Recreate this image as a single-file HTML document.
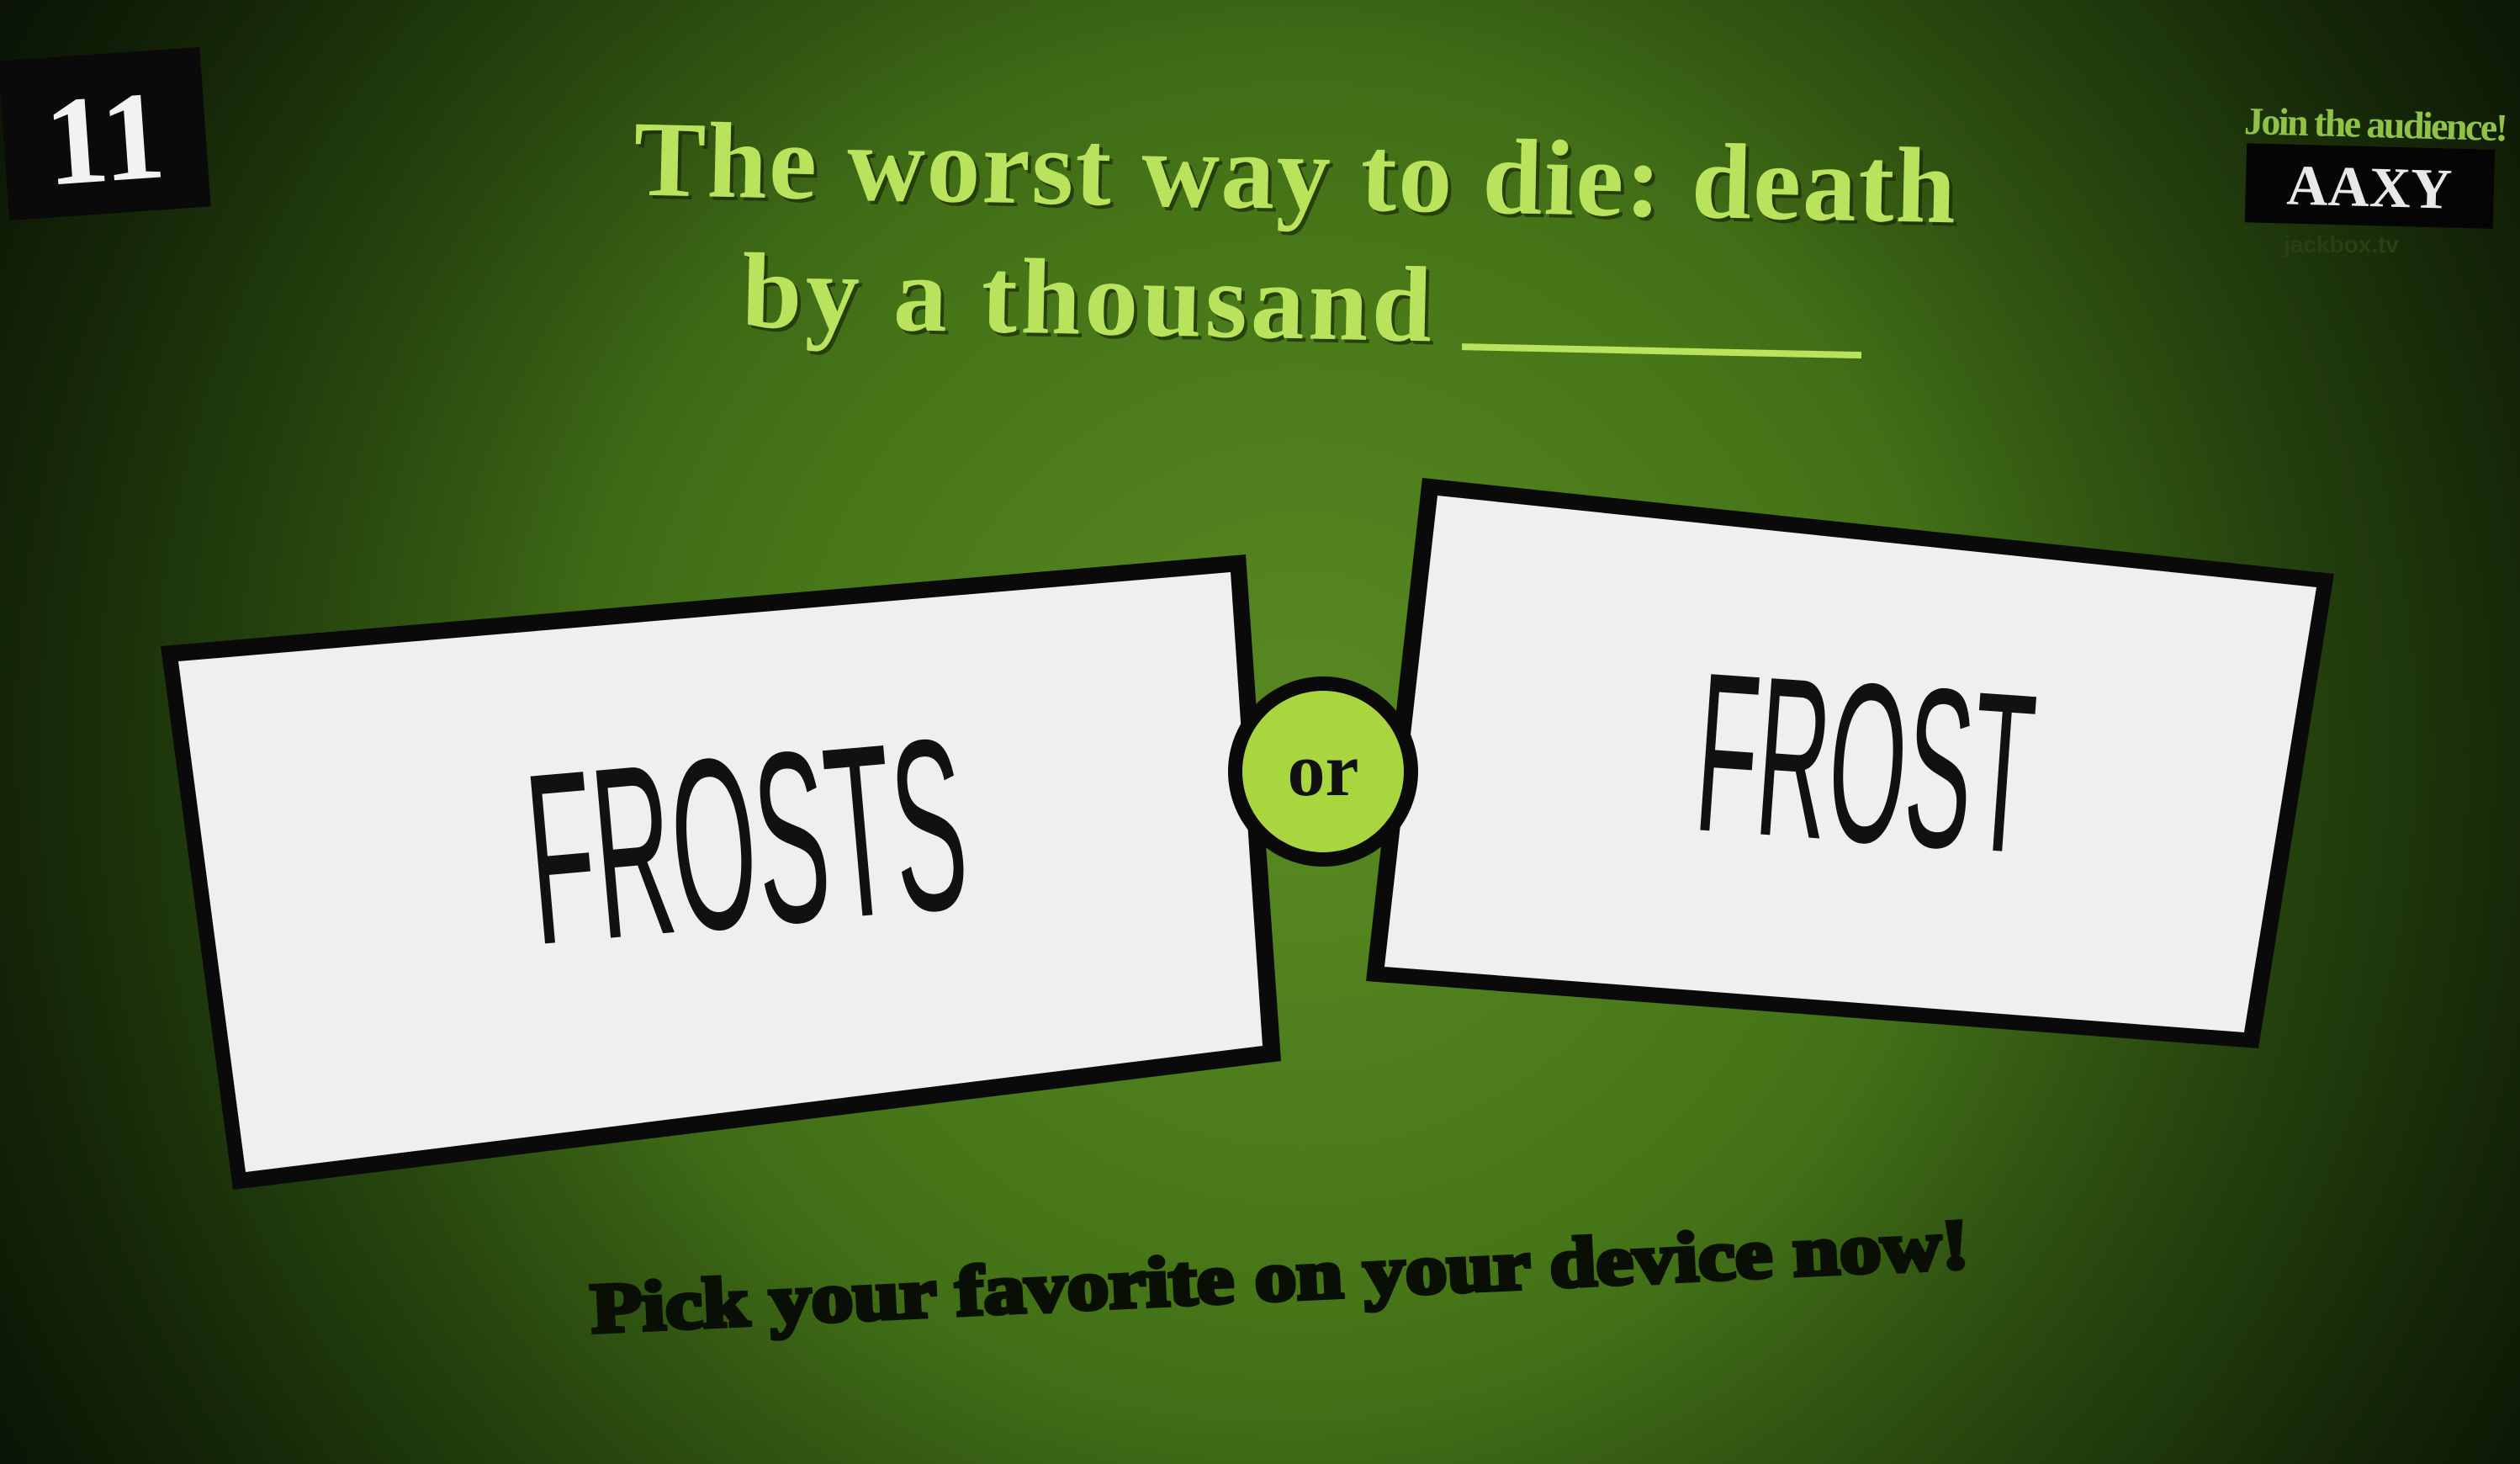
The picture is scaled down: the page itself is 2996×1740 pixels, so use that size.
<!DOCTYPE html>
<html><head><meta charset="utf-8"><style>
html,body{margin:0;padding:0;width:2996px;height:1740px;overflow:hidden;background:#2a4a10}
svg{display:block}
</style></head><body>
<svg width="2996" height="1740" viewBox="0 0 2996 1740" xmlns="http://www.w3.org/2000/svg">
<defs>
<radialGradient id="bg" cx="1550" cy="900" r="1900" gradientUnits="userSpaceOnUse">
<stop offset="0" stop-color="#5a8a22"/>
<stop offset="0.35" stop-color="#467518"/>
<stop offset="0.7" stop-color="#2c5010"/>
<stop offset="1" stop-color="#13250a"/>
</radialGradient>
<radialGradient id="rings" cx="1550" cy="900" r="1900" gradientUnits="userSpaceOnUse" spreadMethod="repeat">
<stop offset="0" stop-color="#000" stop-opacity="0"/>
<stop offset="0.025" stop-color="#000" stop-opacity="0.13"/>
<stop offset="0.05" stop-color="#000" stop-opacity="0"/>
</radialGradient>
<radialGradient id="vig" cx="1500" cy="870" r="1800" gradientUnits="userSpaceOnUse">
<stop offset="0.45" stop-color="#000" stop-opacity="0"/>
<stop offset="1" stop-color="#000" stop-opacity="0.6"/>
</radialGradient>
</defs>
<rect width="2996" height="1740" fill="url(#bg)"/>
<rect width="2996" height="1740" fill="url(#rings)"/>
<rect width="2996" height="1740" fill="url(#vig)"/>

<g transform="rotate(-4 124 156)">
<rect x="4" y="64" width="240" height="190" fill="#0a0a0a"/>
<text x="124" y="215" font-family="Liberation Serif" font-weight="bold" font-size="150" fill="#f2f2f2" text-anchor="middle">11</text>
</g>

<g transform="rotate(1.2 1540 320)" font-family="Liberation Serif" font-weight="bold" font-size="128">
<text x="755" y="252" textLength="1572" fill="#1a2a08" opacity="0.7">The worst way to die: death</text>
<text x="751" y="248" textLength="1572" fill="#b9e35c">The worst way to die: death</text>
<text x="887" y="406" textLength="820" fill="#1a2a08" opacity="0.7">by a thousand</text>
<text x="883" y="402" textLength="820" fill="#b9e35c">by a thousand</text>
<rect x="1740" y="404" width="475" height="8" fill="#b9e35c"/>
</g>

<text x="2668" y="163" textLength="314" font-family="Liberation Serif" font-weight="bold" font-size="46" fill="#8fc246" transform="rotate(1.5 2820 150)">Join the audience!</text>
<g transform="rotate(1.5 2815 220)">
<rect x="2670" y="174" width="295" height="94" fill="#050505"/>
<text x="2817" y="245" font-family="Liberation Serif" font-weight="bold" font-size="68" fill="#e8e8e8" text-anchor="middle">AAXY</text>
</g>
<text x="2715" y="300" font-family="Liberation Sans" font-weight="bold" font-size="28" fill="#2a4010">jackbox.tv</text>

<polygon points="191,768 1481,659 1523,1261 277,1414" fill="#0a0a0a"/>
<polygon points="212,786 1463,680 1501,1243 292,1393" fill="#efefed"/>
<text x="889" y="1100" font-family="Liberation Sans Narrow, Liberation Sans" font-size="290" fill="#111" text-anchor="middle" transform="rotate(-5 889 1013)" textLength="520" lengthAdjust="spacingAndGlyphs">FROSTS</text>

<polygon points="1691,568 2775,682 2685,1246 1624,1166" fill="#0a0a0a"/>
<polygon points="1709,589 2754,698 2668,1227 1646,1149" fill="#efefed"/>
<text x="2217" y="1000" font-family="Liberation Sans Narrow, Liberation Sans" font-size="270" fill="#111" text-anchor="middle" transform="rotate(4 2217 917)" textLength="400" lengthAdjust="spacingAndGlyphs">FROST</text>

<circle cx="1573" cy="917" r="113" fill="#0a0a0a"/>
<circle cx="1573" cy="917" r="96" fill="#a9d63f"/>
<text x="1573" y="945" font-family="Liberation Serif" font-weight="bold" font-size="90" fill="#111" text-anchor="middle">or</text>

<text x="701" y="1545" textLength="1640" lengthAdjust="spacingAndGlyphs" font-family="Liberation Serif" font-weight="bold" font-size="84" fill="#0a0f05" stroke="#0a0f05" stroke-width="5" transform="rotate(-2.7 1520 1500)">Pick your favorite on your device now!</text>
</svg>
</body></html>
